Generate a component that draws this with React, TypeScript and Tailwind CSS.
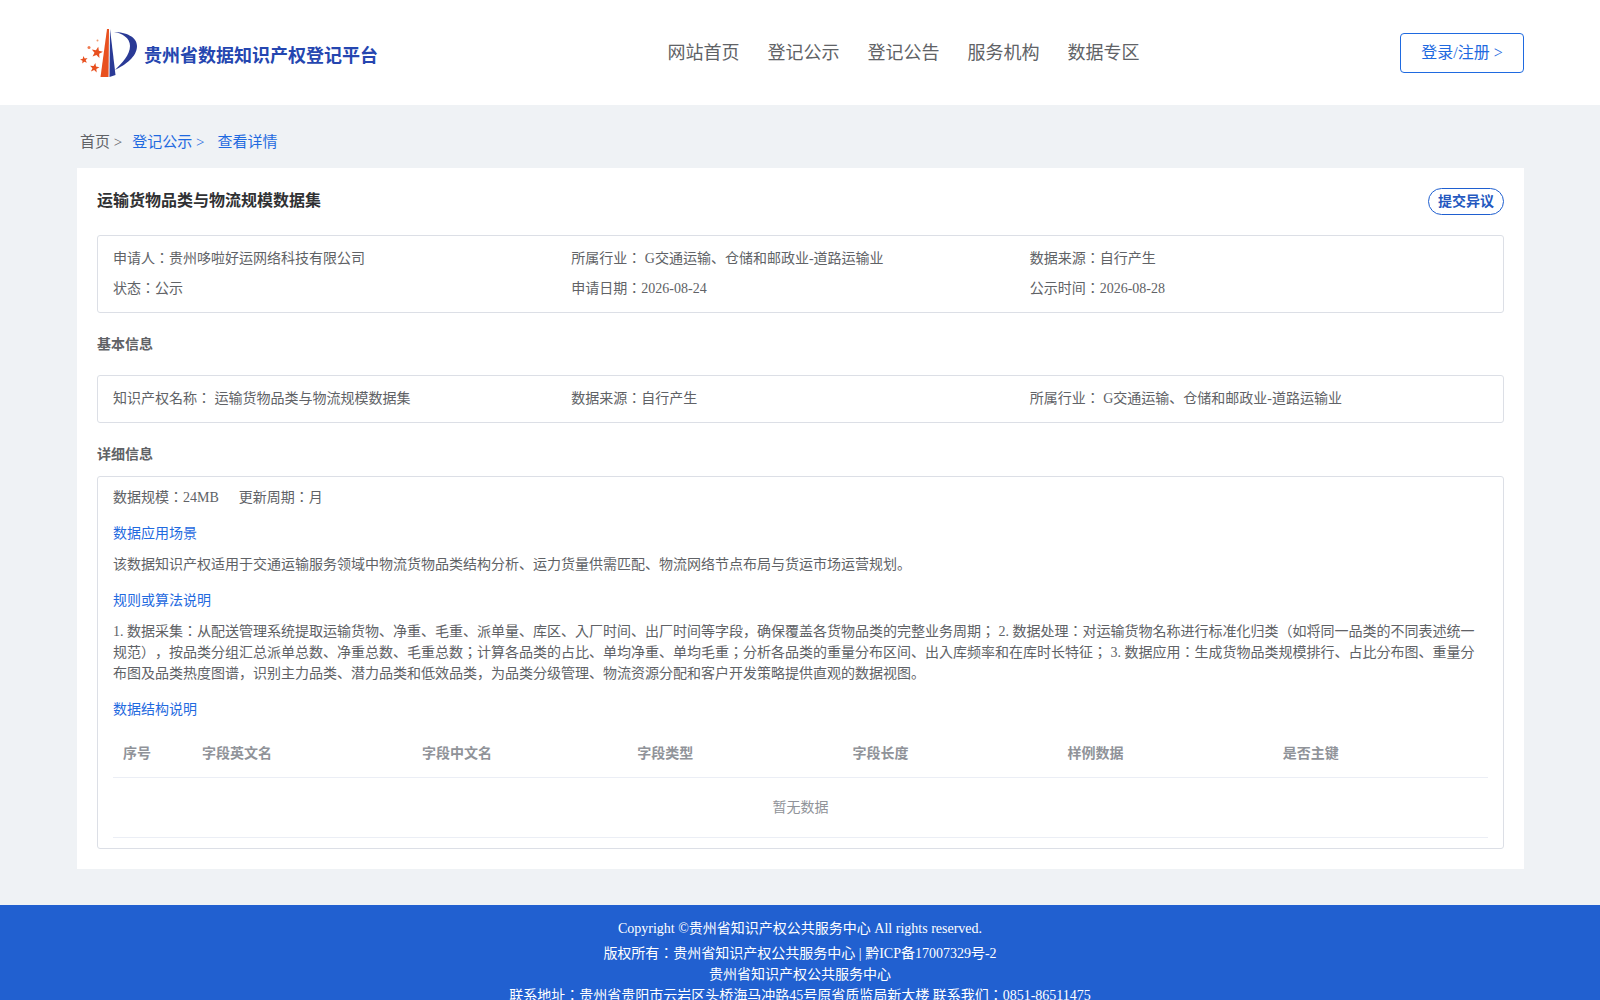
const font = { fontFamily: '"Liberation Serif", "Noto Sans CJK SC", serif' };

// lines with a colon or semicolon: the JP face centres those marks as the picture does
const jp = "[font-family:'Liberation_Serif','Noto_Sans_CJK_JP',serif]";

const nav = ["网站首页", "登记公示", "登记公告", "服务机构", "数据专区"];
const columns = ["字段英文名", "字段中文名", "字段类型", "字段长度", "样例数据", "是否主键"];

function Star({ cx, cy, r, rotate = 0 }: { cx: number; cy: number; r: number; rotate?: number }) {
  const points = Array.from({ length: 10 }, (_, i) => {
    const radius = i % 2 === 0 ? r : r * 0.42;
    const angle = ((i * 36 - 90 + rotate) * Math.PI) / 180;
    return `${cx + radius * Math.cos(angle)},${cy + radius * Math.sin(angle)}`;
  }).join(" ");
  return <polygon points={points} fill="#e8501f" />;
}

function Logo() {
  return (
    <svg width="62" height="54" viewBox="78 26 62 54" className="shrink-0">
      <path d="M107 29 L109 29 L108.500 77 L100.500 77 Z" fill="#e8501f" />
      <path d="M110 29 L115.500 75 L109.500 77 Z" fill="#2a3a96" />
      <path d="M114 32 C126 32 137 37 137 46 C137 57 125 65 115 70 C122 63 130 55 130 46 C130 38 122 33 114 32 Z" fill="#2a3a96" />
      <Star cx={97} cy={52.500} r={6} rotate={12} />
      <Star cx={84} cy={60} r={4} rotate={-10} />
      <Star cx={94.500} cy={68} r={5} rotate={10} />
      <circle cx="89" cy="47.500" r="1.500" fill="#ef7a50" />
      <circle cx="97.500" cy="40.500" r="1" fill="#ef9a70" />
    </svg>
  );
}

function Field({ text }: { text: string }) {
  return <div className={`leading-[20px] ${jp}`}>{text}</div>;
}

export default function App() {
  return (
    <div className="h-screen overflow-hidden bg-[#eff2f5] text-[14px] [text-spacing-trim:space-all]" style={font}>
      <header className="h-[105px] bg-white px-[80px] flex items-start justify-between">
        <div className="flex items-center w-[420px] pt-[26px] ml-[-2px]">
          <Logo />
          <span className="text-[18px] font-bold text-[#2546b0] ml-[4px] mt-[6px]">贵州省数据知识产权登记平台</span>
        </div>
        <nav className="flex gap-[28px] text-[18px] text-[#606266] pt-[40px] leading-[26px] ml-[-91px]">
          {nav.map((item) => (
            <a key={item}>{item}</a>
          ))}
        </nav>
        <button className="mt-[33px] mr-[-4px] w-[124px] h-[40px] border border-[#1f6ae0] rounded-[4px] text-[16px] text-[#1f6ae0] bg-white">
          登录/注册 &gt;
        </button>
      </header>

      <main className="pl-[77px] pr-[76px]">
        <div className="h-[63px] flex items-center pl-[3px] text-[15px] pt-[11px]">
          <span className="text-[#606266]">首页 &gt;</span>
          <span className="text-[#1f6ae0] ml-[10px]">登记公示 &gt;</span>
          <span className="text-[#1f6ae0] ml-[13px]">查看详情</span>
        </div>

        <section className="bg-white h-[701px] px-[20px] pt-[20px] text-[#606266]">
          <div className="flex justify-between items-start h-[47px]">
            <h1 className="text-[16px] font-bold text-[#303133] leading-[26px]">运输货物品类与物流规模数据集</h1>
            <button className="w-[76px] h-[27px] border border-[#1f5fd0] rounded-[14px] text-[14px] font-bold text-[#2458bf]">
              提交异议
            </button>
          </div>

          <div className="border border-[#dcdfe6] rounded-[3px] h-[78px] px-[15px] pt-[13px] grid grid-cols-3 content-start gap-y-[10px]">
            <Field text="申请人：贵州哆啦好运网络科技有限公司" />
            <Field text="所属行业： G交通运输、仓储和邮政业-道路运输业" />
            <Field text="数据来源：自行产生" />
            <Field text="状态：公示" />
            <Field text="申请日期：2026-08-24" />
            <Field text="公示时间：2026-08-28" />
          </div>

          <h2 className="text-[14px] font-bold mt-[21px] leading-[22px]">基本信息</h2>
          <div className="border border-[#dcdfe6] rounded-[3px] h-[48px] mt-[19px] px-[15px] grid grid-cols-3 items-center">
            <Field text="知识产权名称： 运输货物品类与物流规模数据集" />
            <Field text="数据来源：自行产生" />
            <Field text="所属行业： G交通运输、仓储和邮政业-道路运输业" />
          </div>

          <h2 className="text-[14px] font-bold mt-[21px] leading-[22px]">详细信息</h2>
          <div className="border border-[#dcdfe6] rounded-[3px] h-[373px] mt-[10px] px-[15px] pt-[11px]">
            <div className={`leading-[20px] flex gap-[20px] ${jp}`}>
              <span>数据规模：24MB</span>
              <span>更新周期：月</span>
            </div>
            <h3 className="text-[#1f6ae0] leading-[20px] mt-[16px]">数据应用场景</h3>
            <p className="leading-[21px] mt-[10px]">
              该数据知识产权适用于交通运输服务领域中物流货物品类结构分析、运力货量供需匹配、物流网络节点布局与货运市场运营规划。
            </p>
            <h3 className="text-[#1f6ae0] leading-[20px] mt-[16px]">规则或算法说明</h3>
            <p className={`leading-[21px] mt-[10px] ${jp}`}>
              1. 数据采集：从配送管理系统提取运输货物、净重、毛重、派单量、库区、入厂时间、出厂时间等字段，确保覆盖各货物品类的完整业务周期； 2. 数据处理：对运输货物名称进行标准化归类（如将同一品类的不同表述统一规范），按品类分组汇总派单总数、净重总数、毛重总数；计算各品类的占比、单均净重、单均毛重；分析各品类的重量分布区间、出入库频率和在库时长特征； 3. 数据应用：生成货物品类规模排行、占比分布图、重量分布图及品类热度图谱，识别主力品类、潜力品类和低效品类，为品类分级管理、物流资源分配和客户开发策略提供直观的数据视图。
            </p>
            <h3 className="text-[#1f6ae0] leading-[20px] mt-[16px]">数据结构说明</h3>

            <div className="mt-[10px]">
              <div className="grid grid-cols-[79px_220px_repeat(5,1fr)] h-[48px] items-center border-b border-[#ebeef5] font-bold text-[#909399]">
                <div className="pl-[10px]">序号</div>
                {columns.map((c) => (
                  <div key={c} className="pl-[10px]">{c}</div>
                ))}
              </div>
              <div className="h-[60px] flex items-center justify-center border-b border-[#ebeef5] text-[#909399]">暂无数据</div>
            </div>
          </div>
        </section>
      </main>

      <footer className="mt-[36px] bg-[#2160d0] text-white text-center pt-[13px]">
        <div className="leading-[21px] mb-[4px]">Copyright ©贵州省知识产权公共服务中心 All rights reserved.</div>
        <div className={`leading-[21px] ${jp}`}>版权所有：贵州省知识产权公共服务中心 | 黔ICP备17007329号-2</div>
        <div className="leading-[21px]">贵州省知识产权公共服务中心</div>
        <div className={`leading-[21px] ${jp}`}>联系地址：贵州省贵阳市云岩区头桥海马冲路45号原省质监局新大楼 联系我们：0851-86511475</div>
      </footer>
    </div>
  );
}
